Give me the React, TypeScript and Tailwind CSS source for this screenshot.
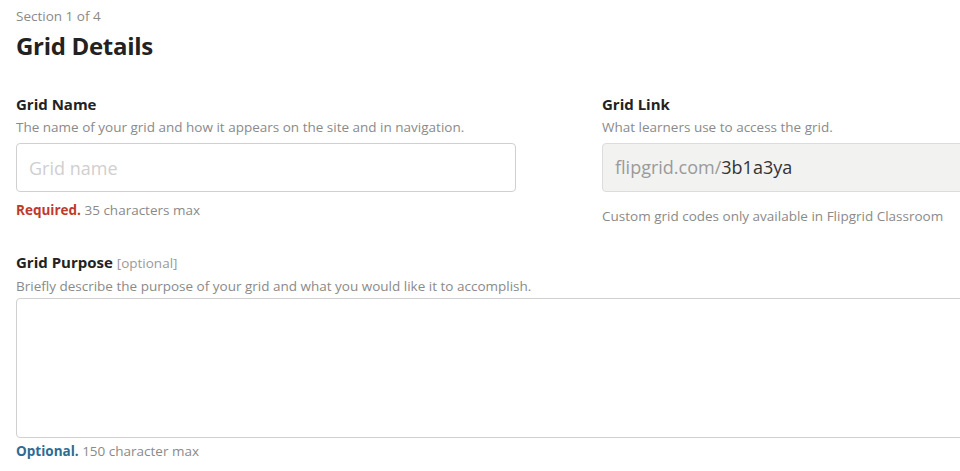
import React from "react";

function Field({ label, hint, children }: any) {
  return (
    <div className="flex flex-col">
      <div className="text-[15px] font-bold text-[#222] leading-[18px]">{label}</div>
      <div className="text-[13.5px] text-[#8a8a8a] leading-[16px] mt-[6px]">{hint}</div>
      {children}
    </div>
  );
}

export default function App() {
  return (
    <div className="w-[960px] h-[471px] overflow-hidden bg-white" style={{ fontFamily: "'Open Sans', Lato, sans-serif" }}>
      <div className="w-[1120px] pl-4 pt-[8px]">
        <div className="text-[13.5px] text-[#8a8a8a] leading-[16px]">Section 1 of 4</div>
        <h1 className="text-[24px] font-bold text-[#222] leading-[28px] mt-[8px] tracking-[-0.3px]">Grid Details</h1>

        <div className="grid grid-cols-[500px_500px] gap-x-[86px] mt-[35px]">
          <Field label="Grid Name" hint="The name of your grid and how it appears on the site and in navigation.">
            <input
              className="mt-[8px] h-[49px] w-full rounded-[4px] border border-[#d0d0d0] px-3 text-[18px] text-[#222] placeholder:text-[#cfcfcf] outline-none"
              placeholder="Grid name"
            />
            <div className="text-[13.5px] text-[#8a8a8a] mt-[10px] leading-[16px]">
              <span className="font-bold text-[#c0392b]">Required.</span> 35 characters max
            </div>
          </Field>
          <Field label="Grid Link" hint="What learners use to access the grid.">
            <div className="mt-[8px] h-[49px] w-full rounded-[4px] border border-[#dcdcdc] bg-[#f2f2f0] px-3 flex items-center text-[18px]">
              <span className="text-[#9a9a9a]">flipgrid.com/</span>
              <span className="text-[#333]">3b1a3ya</span>
            </div>
            <div className="text-[13.5px] text-[#8a8a8a] mt-[16px] leading-[16px]">
              Custom grid codes only available in Flipgrid Classroom
            </div>
          </Field>
        </div>

        <div className="mt-[29px] w-[1086px]">
          <div className="text-[15px] font-bold text-[#222] leading-[18px]">
            Grid Purpose <span className="text-[13.5px] font-normal text-[#9a9a9a]">[optional]</span>
          </div>
          <div className="text-[13.5px] text-[#8a8a8a] leading-[16px] mt-[6px]">
            Briefly describe the purpose of your grid and what you would like it to accomplish.
          </div>
          <textarea className="mt-[4px] block h-[140px] w-full resize-none rounded-[4px] border border-[#d0d0d0] outline-none" />
          <div className="text-[13.5px] text-[#8a8a8a] mt-[5px] leading-[16px]">
            <span className="font-bold text-[#2d6b93]">Optional.</span> 150 character max
          </div>
        </div>
      </div>
    </div>
  );
}
